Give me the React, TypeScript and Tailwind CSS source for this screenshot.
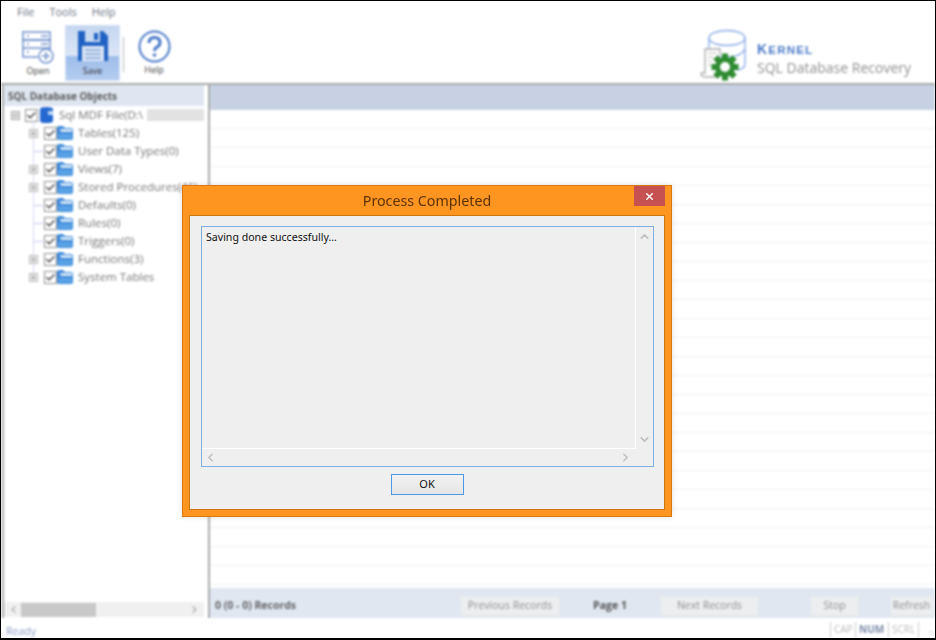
import { Minus, Plus, X, ChevronUp, ChevronDown, ChevronLeft, ChevronRight, Check } from "lucide-react"

const treeItems = [
  { label: "Tables(125)", expand: true },
  { label: "User Data Types(0)", expand: false },
  { label: "Views(7)", expand: true },
  { label: "Stored Procedures(46)", expand: true },
  { label: "Defaults(0)", expand: false },
  { label: "Rules(0)", expand: false },
  { label: "Triggers(0)", expand: false },
  { label: "Functions(3)", expand: true },
  { label: "System Tables", expand: true },
]

const CheckBox = () => (
  <div className="w-[13px] h-[13px] border border-[#8d8d8d] bg-white flex items-center justify-center shrink-0">
    <Check size={11} strokeWidth={3} className="text-[#444]" />
  </div>
)

const Folder = () => (
  <svg width="16" height="14" viewBox="0 0 16 14" className="shrink-0">
    <path d="M0 2 Q0 0 2 0 H6 L8 2 H14 Q16 2 16 4 V12 Q16 14 14 14 H2 Q0 14 0 12 Z" fill="#3f8bdb" />
    <path d="M3 3 H15 V6 H4 Z" fill="#d3e5f7" />
    <path d="M1 8 H15 V12 Q15 13 14 13 H2 Q1 13 1 12 Z" fill="#5aa2e6" />
  </svg>
)

const DbIcon = () => (
  <svg width="13" height="16" viewBox="0 0 13 16" className="shrink-0">
    <path d="M0 2 Q0 0 6 0 Q13 0 13 2 V14 Q13 16 6 16 Q0 16 0 14 Z" fill="#2468d0" />
    <path d="M8 4 H13 V8 H8 Z" fill="#bcd4f4" />
  </svg>
)

const OpenIcon = () => (
  <svg width="32" height="33" viewBox="0 0 32 33" fill="none" stroke="#6f90cc" strokeWidth="1.5">
    <rect x="1" y="1" width="27" height="8" />
    <rect x="1" y="9" width="27" height="8" />
    <path d="M1 17 V26 H16 M28 17 V19" />
    <path d="M5 5 H7 M5 13 H7 M5 21 H7 M19 5 H26 M19 13 H26" />
    <circle cx="24" cy="25" r="7" fill="#fff" />
    <path d="M24 21 V29 M20 25 H28" />
  </svg>
)

const SaveIcon = () => (
  <svg width="32" height="32" viewBox="0 0 32 32">
    <path d="M1 1 H26 L31 6 V31 H1 Z" fill="#1f62c4" />
    <rect x="8" y="1" width="15" height="11" fill="#c9daf2" />
    <rect x="17" y="3" width="4" height="7" fill="#1f62c4" />
    <rect x="5" y="16" width="22" height="15" fill="#dfe8f6" />
    <path d="M8 20 H24 M8 24 H24 M8 28 H24" stroke="#7d9fd6" strokeWidth="1.5" />
  </svg>
)

const HelpIcon = () => (
  <svg width="33" height="33" viewBox="0 0 33 33" fill="none" stroke="#4a79c8">
    <circle cx="16.5" cy="16.5" r="15" strokeWidth="2" />
    <path d="M11 13 Q11 7.5 16.5 7.5 Q22 7.5 22 12.5 Q22 15.5 19 17 Q16.5 18.5 16.5 21" strokeWidth="3" />
    <circle cx="16.5" cy="25" r="1.8" fill="#4a79c8" stroke="none" />
  </svg>
)

const gearTeeth = [0, 45, 90, 135, 180, 225, 270, 315]

const KernelLogo = () => (
  <svg width="52" height="54" viewBox="0 0 52 54" fill="none">
    <ellipse cx="28" cy="9" rx="18" ry="7.5" stroke="#86a9e6" strokeWidth="1.3" />
    <path d="M10 9 V30 M46 9 V35 Q46 40 38 41 M10 20 Q14 28 28 28 Q42 28 46 20" stroke="#86a9e6" strokeWidth="1.3" />
    <path d="M2 44 H6 V20 H21 V26 M2 44 Q2 48 6 48 H20" stroke="#aaa" strokeWidth="1.3" fill="#fff" />
    <path d="M9 24 H18 M9 28 H15 M9 32 H13 M9 36 H13" stroke="#bbb" strokeWidth="1.2" />
    <g transform="translate(26 38)">
      {gearTeeth.map((deg) => (
        <rect key={deg} x="-3" y="-13.5" width="6" height="7" fill="#2e8b30" transform={`rotate(${deg})`} />
      ))}
      <circle r="7.5" stroke="#2e8b30" strokeWidth="5" />
    </g>
  </svg>
)

const FooterButton = ({ label, width }: { label: string; width: string }) => (
  <div className={`${width} h-[20px] bg-[#eceef0] border border-[#e6e8ea] flex items-center justify-center text-[10.5px] text-[#8f8f8f] whitespace-nowrap shrink-0`}>
    {label}
  </div>
)

const App = () => {
  return (
    <div className="relative w-[936px] h-[640px] bg-black overflow-hidden font-['Open_Sans',sans-serif]">
      <div className="w-full h-full pt-px px-px pb-0.5">
        <div className="w-full h-full bg-white overflow-hidden">
          <div className="w-full h-full bg-white flex flex-col blur-[0.8px]">
            {/* menu + toolbar */}
            <div className="h-[84px] shrink-0 flex justify-between border-b-2 border-[#a9a9a9]">
              <div className="flex flex-col">
                <div className="flex gap-[15px] pl-4 pt-[3px] h-[24px] text-[11px] text-[#6d7584]">
                  <span>File</span>
                  <span>Tools</span>
                  <span>Help</span>
                </div>
                <div className="flex items-start pl-[10px]">
                  <div className="w-[54px] h-[55px] flex flex-col items-center pt-[6px]">
                    <OpenIcon />
                    <span className="text-[9px] leading-[12px] text-[#444] mt-px">Open</span>
                  </div>
                  <div className="w-[55px] h-[56px] flex flex-col items-center pt-[4px] bg-[linear-gradient(180deg,#c5d6f0_0%,#dce7f7_55%,#9dbdea_56%,#b4cdf0_100%)] border border-[#d3e0f3]">
                    <SaveIcon />
                    <span className="text-[9px] leading-[12px] text-[#333] mt-[3px]">Save</span>
                  </div>
                  <div className="w-px h-[35px] bg-[#b5b5b5] mt-[12px] ml-[3px]" />
                  <div className="w-[60px] flex flex-col items-center pt-[5px]">
                    <HelpIcon />
                    <span className="text-[9px] leading-[12px] text-[#444] mt-[1px]">Help</span>
                  </div>
                </div>
              </div>
              <div className="flex items-start pt-[28px] pr-[24px]">
                <KernelLogo />
                <div className="flex flex-col ml-[6px] pt-[13px]">
                  <span className="text-[14px] leading-[15px] font-bold tracking-[1.2px] text-[#4a78c8] font-['Liberation_Sans',sans-serif]">
                    K<span className="text-[11.5px]">ERNEL</span>
                  </span>
                  <span className="text-[14px] leading-[19px] text-[#909090] whitespace-nowrap">SQL Database Recovery</span>
                </div>
              </div>
            </div>

            {/* main */}
            <div className="flex-1 flex min-h-0">
              {/* tree */}
              <div className="w-[202px] shrink-0 ml-px flex flex-col border-l-2 border-[#a9a9a9]">
                <div className="h-[21px] bg-[#dfe6f1] pl-[4px] pt-px flex items-center text-[10px] font-bold text-[#5c5c5c] whitespace-nowrap">
                  SQL Database Objects
                </div>
                <div className="flex-1 pl-[7px] relative">
                  <div className="absolute left-[29px] top-[14px] w-px h-[160px] bg-[#d5d7f2]" />
                  <div className="flex items-center h-[18px]">
                    <div className="w-[9px] h-[9px] bg-[#ddd] border border-[#aaa] flex items-center justify-center mr-[5px]">
                      <Minus size={7} className="text-[#777]" />
                    </div>
                    <CheckBox />
                    <div className="ml-[2px] mr-[6px] flex"><DbIcon /></div>
                    <span className="text-[11.5px] text-[#757575] whitespace-nowrap">Sql MDF File(D:\</span>
                    <div className="flex-1 h-[12px] bg-[#e2e2e2] ml-[4px]" />
                  </div>
                  {treeItems.map((item) => (
                    <div key={item.label} className="relative flex items-center h-[18px] pl-[18px]">
                      <div className="w-[9px] h-[9px] mr-[6px] shrink-0 flex items-center justify-center">
                        {item.expand ? (
                          <div className="w-[9px] h-[9px] bg-[#e6e6e6] border border-[#bbb] flex items-center justify-center">
                            <Plus size={7} className="text-[#777]" />
                          </div>
                        ) : (
                          <div className="w-[9px] h-px bg-[#c5c8ee] translate-x-[5px]" />
                        )}
                      </div>
                      <CheckBox />
                      <div className="mr-[5px] shrink-0 flex"><Folder /></div>
                      <span className="text-[11.5px] text-[#757575] whitespace-nowrap">{item.label}</span>
                    </div>
                  ))}
                </div>
                <div className="relative h-[15px] bg-[#f0f0f0] flex items-center justify-between text-[#666] shrink-0 mb-px">
                  <ChevronLeft size={11} className="ml-[4px]" />
                  <div className="w-[75px] h-[14px] bg-[#c8c8c8] absolute left-[17px]" />
                  <ChevronRight size={11} className="mr-[4px]" />
                </div>
              </div>

              {/* records */}
              <div className="flex-1 flex flex-col ml-[4px] border-l-2 border-[#a9a9a9] min-w-0">
                <div className="h-[25px] bg-[#c8d1e3] shrink-0" />
                <div className="flex-1 bg-[repeating-linear-gradient(180deg,#ffffff_0px,#ffffff_18px,#f1f1f1_18px,#f1f1f1_19px)]" />
                <div className="h-[30px] bg-[#e0e7f1] flex items-center shrink-0 pl-[5px] pt-[6px]">
                  <span className="w-[245px] text-[10.5px] font-bold text-[#666] shrink-0">0 (0 - 0) Records</span>
                  <FooterButton label="Previous Records" width="w-[100px]" />
                  <span className="w-[100px] text-center text-[10.5px] font-bold text-[#555] shrink-0">Page 1</span>
                  <FooterButton label="Next Records" width="w-[99px]" />
                  <div className="w-[51px] shrink-0" />
                  <FooterButton label="Stop" width="w-[49px]" />
                  <div className="w-[31px] shrink-0" />
                  <FooterButton label="Refresh" width="w-[43px]" />
                </div>
              </div>
            </div>

            {/* status bar */}
            <div className="h-[20px] shrink-0 flex items-center justify-between pl-[5px] text-[10.5px]">
              <span className="text-[#8a9cc4] pt-[7px]">Ready</span>
              <div className="flex items-end h-full text-[10px] pt-[4px]">
                <span className="w-[25px] h-full border-l border-[#ccc] pl-[3px] text-[#bbb]">CAP</span>
                <span className="w-[33px] h-full border-l border-[#ccc] pl-[3px] text-[#7c8aa8] font-bold">NUM</span>
                <span className="w-[30px] h-full border-l border-[#ccc] pl-[3px] text-[#bbb]">SCRL</span>
                <span className="w-[17px] h-full border-l border-[#ccc] pr-px text-[#aaa] text-right">..</span>
              </div>
            </div>
          </div>
        </div>
      </div>

      {/* dialog */}
      <div className="absolute left-[182px] top-[185px] w-[490px] h-[332px] bg-[#fe9520] border border-[#d9780f] shadow-[0_0_6px_rgba(0,0,0,0.12)] flex flex-col">
        <div className="h-[29px] shrink-0 relative flex items-center justify-center pt-[1px] text-[14.25px] text-[#5d3208] font-['Noto_Sans',sans-serif]">
          Process Completed
          <div className="absolute right-[6px] top-0 w-[31px] h-[20px] bg-[#c75050] flex items-center justify-center">
            <X size={11} strokeWidth={3} className="text-white" />
          </div>
        </div>
        <div className="flex-1 mx-[6px] mb-[6px] bg-[#efefef] border border-[#c9770f] pl-[11px] pr-[10px] pt-[11px] flex flex-col">
          <div className="h-[241px] -mt-px border border-[#7eaee2] flex flex-col text-[10.6px] text-[#111] font-['Noto_Sans',sans-serif]">
            <div className="flex-1 flex min-h-0">
              <div className="flex-1 border-b border-r border-white pl-[4px] pt-[3px] leading-[15px]">Saving done successfully...</div>
              <div className="w-[17px] flex flex-col items-center justify-between py-[3px] text-[#c0c0c0]">
                <ChevronUp size={13} strokeWidth={3} />
                <ChevronDown size={13} strokeWidth={3} />
              </div>
            </div>
            <div className="h-[17px] shrink-0 flex items-center justify-between text-[#c0c0c0] pl-[2px] pr-[21px]">
              <ChevronLeft size={13} strokeWidth={3} />
              <ChevronRight size={13} strokeWidth={3} />
            </div>
          </div>
          <div className="flex justify-center mt-[7px] pr-px">
            <div className="w-[73px] h-[21px] border border-[#4c97e6] bg-[linear-gradient(180deg,#f2f2f2,#e5e5e5)] flex items-center justify-center text-[11px] text-[#111] font-['Noto_Sans',sans-serif]">
              OK
            </div>
          </div>
        </div>
      </div>
    </div>
  )
}

export default App
